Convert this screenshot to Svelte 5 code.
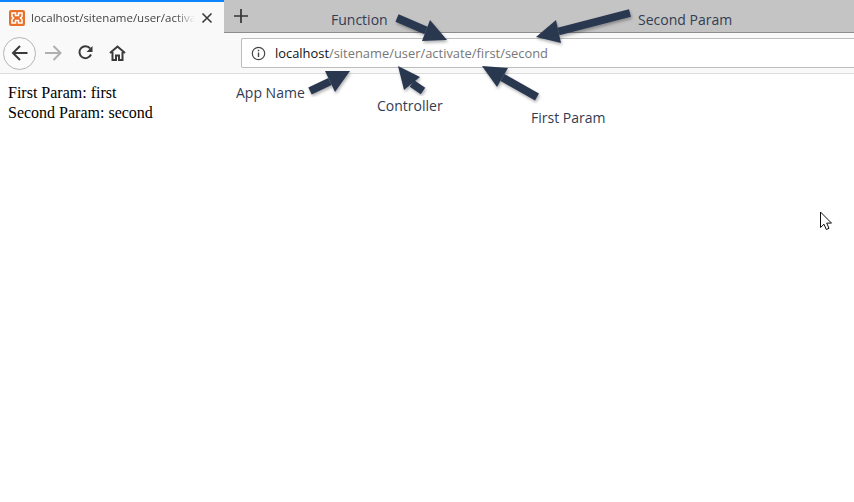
<script>
  const arrows = [
    { tail: [397, 18], tip: [447, 40], a: [430, 20], b: [422, 41] },
    { tail: [630, 13], tip: [536, 37], a: [556, 20], b: [561, 43] },
    { tail: [310, 91], tip: [350, 71], a: [325, 71], b: [335, 92] },
    { tail: [423, 91], tip: [398, 66], a: [420, 77], b: [404, 90] },
    { tail: [537, 97], tip: [482, 66], a: [508, 68], b: [497, 87] }
  ];

  const notes = [
    { text: "Function", x: 331, y: 11 },
    { text: "Second Param", x: 638, y: 11 },
    { text: "App Name", x: 236, y: 84 },
    { text: "Controller", x: 377, y: 97 },
    { text: "First Param", x: 531, y: 109 }
  ];
</script>

<div class="browser">
  <div class="tabstrip">
    <div class="tab">
      <svg class="favicon" width="16" height="16" viewBox="0 0 16 16">
        <rect width="16" height="16" rx="2" fill="#e8702a" />
        <path d="M3 3h3.500v2.500h3V3H13v3.500l-1.500 1.500L13 9.500V13H9.500v-2.500h-3V13H3V9.500L4.500 8 3 6.500z" fill="none" stroke="#fff" stroke-width="1.500" />
      </svg>
      <span class="tab-title">localhost/sitename/user/activate/first/second</span>
      <svg class="close" width="12" height="12" viewBox="0 0 12 12">
        <path d="M1.500 1.500l9 9M10.500 1.500l-9 9" stroke="#3a3a3a" stroke-width="1.600" />
      </svg>
    </div>
    <div class="newtab">
      <svg width="14" height="14" viewBox="0 0 14 14">
        <path d="M7 0v14M0 7h14" stroke="#333" stroke-width="1.700" />
      </svg>
    </div>
  </div>

  <div class="toolbar">
    <div class="back">
      <svg width="17" height="16" viewBox="0 0 17 16">
        <path d="M16.500 8H2M9 1L2 8l7 7" fill="none" stroke="#3a3a3a" stroke-width="2" />
      </svg>
    </div>
    <svg class="nav forward" width="17" height="16" viewBox="0 0 17 16">
      <path d="M0 8h15M8.500 1l7 7-7 7" fill="none" stroke="#b0b0b0" stroke-width="2" />
    </svg>
    <svg class="nav reload" width="16" height="16" viewBox="0 0 16 16">
      <path d="M13 9.500A6 6 0 1 1 12.200 3.500" fill="none" stroke="#3a3a3a" stroke-width="2" />
      <path d="M14.500 1v6h-6z" fill="#3a3a3a" />
    </svg>
    <svg class="nav home" width="17" height="16" viewBox="0 0 17 16">
      <path d="M1 8l7.500-6.500L16 8M3.500 7v8h3.500v-4.500h3V15h3.500V7" fill="none" stroke="#3a3a3a" stroke-width="2" />
    </svg>
    <div class="urlbar">
      <svg width="15" height="15" viewBox="0 0 15 15">
        <circle cx="7.500" cy="7.500" r="6.200" fill="none" stroke="#444" stroke-width="1.200" />
        <path d="M7.500 6.500v4.500M7.500 3.800v1.500" stroke="#444" stroke-width="1.400" />
      </svg>
      <span class="url"><b>localhost</b>/sitename/user/activate/first/second</span>
    </div>
  </div>
</div>

<div class="page">
  First Param: first<br />
  Second Param: second
</div>

<svg class="overlay" width="854" height="502">
  <defs>
    <filter id="soft" x="-20%" y="-20%" width="140%" height="140%">
      <feDropShadow dx="1" dy="2" stdDeviation="1.500" flood-color="#000" flood-opacity="0.3" />
    </filter>
  </defs>
  {#each arrows as arrow}
    <g filter="url(#soft)" fill="#2a3850" stroke="#2a3850">
      <line x1={arrow.tail[0]} y1={arrow.tail[1]} x2={(arrow.a[0] + arrow.b[0]) / 2} y2={(arrow.a[1] + arrow.b[1]) / 2} stroke-width="8" />
      <polygon points="{arrow.tip} {arrow.a} {arrow.b}" stroke="none" />
    </g>
  {/each}
  <path d="M820.500 212v15.500l3.500-3.300 2.300 5.300 2.700-1.200-2.300-5.200h4.800z" fill="#fff" stroke="#111" stroke-width="1" />
</svg>

{#each notes as note}
  <span class="note" style="left: {note.x}px; top: {note.y}px">{note.text}</span>
{/each}

<style>
  :global(body) {
    background: #fff;
    font-family: "Liberation Serif", serif;
  }
  .browser {
    font-family: "Open Sans", "Liberation Sans", sans-serif;
  }
  .tabstrip {
    display: flex;
    height: 33px;
    background: #c4c4c4;
    border-bottom: 1px solid #8c8c8c;
    box-sizing: border-box;
  }
  .tab {
    display: flex;
    align-items: center;
    gap: 6px;
    width: 224px;
    height: 33px;
    box-sizing: border-box;
    padding: 0 11px 0 9px;
    background: #f9f9f9;
    border-top: 2px solid #0a84ff;
  }
  .tab-title {
    flex: 1;
    overflow: hidden;
    white-space: nowrap;
    font-size: 11.500px;
    color: #444;
    -webkit-mask-image: linear-gradient(to right, #000 88%, transparent);
    mask-image: linear-gradient(to right, #000 88%, transparent);
  }
  .favicon {
    flex: none;
  }
  .close {
    flex: none;
  }
  .newtab {
    display: flex;
    align-items: center;
    justify-content: center;
    width: 33px;
    height: 32px;
  }
  .toolbar {
    display: flex;
    align-items: center;
    height: 41px;
    box-sizing: border-box;
    padding: 0 0 0 3px;
    background: #f9f9f9;
    border-bottom: 1px solid #dcdcdc;
  }
  .back {
    display: flex;
    align-items: center;
    justify-content: center;
    width: 33px;
    height: 33px;
    box-sizing: border-box;
    border: 1px solid #b5b5b5;
    border-radius: 50%;
    background: #fbfbfb;
    flex: none;
  }
  .nav {
    flex: none;
  }
  .forward {
    margin-left: 9px;
  }
  .reload {
    margin-left: 16px;
  }
  .home {
    margin-left: 15px;
  }
  .urlbar {
    display: flex;
    align-items: center;
    gap: 9px;
    flex: 1;
    height: 30px;
    box-sizing: border-box;
    margin-left: 115px;
    padding-left: 9px;
    background: #fff;
    border: 1px solid #bdbdbd;
    border-right: none;
    border-radius: 2px 0 0 2px;
  }
  .url {
    font-size: 12.900px;
    color: #777;
    white-space: nowrap;
  }
  .url b {
    font-weight: 400;
    color: #111;
  }
  .page {
    padding: 9px 8px 0;
    font-size: 16px;
    line-height: 20px;
    color: #000;
  }
  .overlay {
    position: absolute;
    left: 0;
    top: 0;
    pointer-events: none;
  }
  .note {
    position: absolute;
    font-family: "Open Sans", "DejaVu Sans", sans-serif;
    font-size: 14px;
    line-height: 18px;
    color: #333c52;
    white-space: nowrap;
  }
</style>
